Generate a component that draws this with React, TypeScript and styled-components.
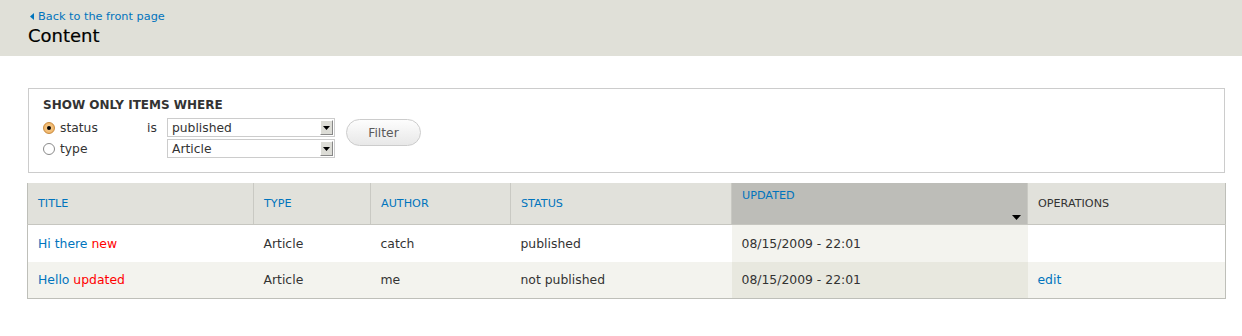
import React from "react";
import styled, { createGlobalStyle } from "styled-components";

const GlobalStyle = createGlobalStyle`
  body {
    margin: 0;
    background: #fff;
    color: #333;
    font-family: "DejaVu Sans", Verdana, sans-serif;
    font-size: 12px;
  }
`;

const link = "#0074bd";

interface Row {
  title: string;
  marker: string;
  type: string;
  author: string;
  status: string;
  updated: string;
  ops?: string;
}

const rows: Row[] = [
  {
    title: "Hi there",
    marker: "new",
    type: "Article",
    author: "catch",
    status: "published",
    updated: "08/15/2009 - 22:01",
  },
  {
    title: "Hello",
    marker: "updated",
    type: "Article",
    author: "me",
    status: "not published",
    updated: "08/15/2009 - 22:01",
    ops: "edit",
  },
];

function Radio({ checked }: { checked?: boolean }) {
  return (
    <RadioCircle $checked={checked}>{checked && <RadioDot />}</RadioCircle>
  );
}

function Select({ value }: { value: string }) {
  return (
    <SelectBox>
      <SelectValue>{value}</SelectValue>
      <SelectButton>
        <svg width="7" height="4" viewBox="0 0 7 4">
          <path d="M0 0h7L3.5 4z" fill="#000" />
        </svg>
      </SelectButton>
    </SelectBox>
  );
}

export default function App() {
  return (
    <>
      <GlobalStyle />
      <Branding>
        <BackLink href="#">
          <svg width="4" height="7" viewBox="0 0 4 7">
            <path d="M4 0v7L0 3.5z" fill={link} />
          </svg>
          Back to the front page
        </BackLink>
        <PageTitle>Content</PageTitle>
      </Branding>

      <Main>
        <Fieldset>
          <Legend>SHOW ONLY ITEMS WHERE</Legend>
          <FilterArea>
            <FilterGrid>
              <Option>
                <Radio checked />
                status
              </Option>
              <Operator>is</Operator>
              <Select value="published" />
              <Option>
                <Radio />
                type
              </Option>
              <span />
              <Select value="Article" />
            </FilterGrid>
            <FilterButton>Filter</FilterButton>
          </FilterArea>
        </Fieldset>

        <Table>
          <colgroup>
            <col style={{ width: 226 }} />
            <col style={{ width: 117 }} />
            <col style={{ width: 140 }} />
            <col style={{ width: 221 }} />
            <col style={{ width: 296 }} />
            <col />
          </colgroup>
          <thead>
            <tr>
              <Th>
                <HeadLink>Title</HeadLink>
              </Th>
              <Th>
                <HeadLink>Type</HeadLink>
              </Th>
              <Th>
                <HeadLink>Author</HeadLink>
              </Th>
              <Th>
                <HeadLink>Status</HeadLink>
              </Th>
              <Th $active>
                <ActiveHead>
                  <HeadLink>Updated</HeadLink>
                  <SortArrow>
                    <svg width="9" height="5" viewBox="0 0 9 5">
                      <path d="M0 0h9L4.5 5z" fill="#000" />
                    </svg>
                  </SortArrow>
                </ActiveHead>
              </Th>
              <Th>Operations</Th>
            </tr>
          </thead>
          <tbody>
            {rows.map((r, i) => (
              <Tr key={i} $even={i % 2 === 1}>
                <Td>
                  <TitleLink>{r.title}</TitleLink> <Marker>{r.marker}</Marker>
                </Td>
                <Td>{r.type}</Td>
                <Td>{r.author}</Td>
                <Td>{r.status}</Td>
                <Td $active $even={i % 2 === 1}>
                  {r.updated}
                </Td>
                <Td>{r.ops && <TitleLink>{r.ops}</TitleLink>}</Td>
              </Tr>
            ))}
          </tbody>
        </Table>
      </Main>
    </>
  );
}

const Branding = styled.div`
  background: #e0e0d8;
  height: 56px;
  box-sizing: border-box;
  padding: 9px 0 0 28px;
  display: flex;
  flex-direction: column;
`;

const BackLink = styled.a`
  display: flex;
  align-items: center;
  gap: 4px;
  font-size: 11.3px;
  line-height: 15px;
  color: ${link};
  text-decoration: none;
  svg {
    margin-left: 2px;
  }
`;

const PageTitle = styled.h1`
  margin: 1px 0 0;
  font-size: 18px;
  font-weight: normal;
  line-height: 22px;
  color: #000;
  -webkit-text-stroke: 0.2px #000;
`;

const Main = styled.div`
  padding: 32px 16px 0 27px;
`;

const Fieldset = styled.div`
  margin: 0 1px;
  border: 1px solid #ccc;
  height: 85px;
  box-sizing: border-box;
  padding: 8px 14px 0 14px;
`;

const Legend = styled.div`
  font-weight: bold;
  font-size: 12px;
  line-height: 16px;
  color: #333;
`;

const FilterArea = styled.div`
  display: flex;
  align-items: flex-start;
  margin-top: 5px;
`;

const FilterGrid = styled.div`
  display: grid;
  grid-template-columns: 104px 20px 168px;
  row-gap: 2px;
  align-items: center;
`;

const Option = styled.div`
  display: flex;
  align-items: center;
  gap: 5px;
  font-size: 12.3px;
  color: #333;
  padding-top: 1px;
`;

const Operator = styled.span`
  font-size: 12.3px;
  padding-top: 1px;
`;

const RadioCircle = styled.span<{ $checked?: boolean }>`
  width: 12px;
  height: 12px;
  box-sizing: border-box;
  border-radius: 50%;
  border: 1px solid ${(p) => (p.$checked ? "#c98b3e" : "#8a8a8a")};
  background: ${(p) =>
    p.$checked ? "radial-gradient(circle, #f7d39c 0%, #eeaa55 100%)" : "#fff"};
  display: flex;
  align-items: center;
  justify-content: center;
`;

const RadioDot = styled.span`
  width: 4px;
  height: 4px;
  border-radius: 50%;
  background: #000;
`;

const SelectBox = styled.div`
  height: 19px;
  box-sizing: border-box;
  border: 1px solid #ccc;
  background: #fff;
  display: flex;
  align-items: center;
`;

const SelectValue = styled.span`
  flex: 1;
  padding-left: 4px;
  font-size: 12.3px;
  color: #333;
`;

const SelectButton = styled.span`
  width: 13px;
  height: 15px;
  margin-right: 1px;
  box-sizing: border-box;
  border-top: 1px solid #fff;
  border-left: 1px solid #fff;
  border-right: 1px solid #888;
  border-bottom: 1px solid #888;
  background: #dcdcd6;
  display: flex;
  align-items: center;
  justify-content: center;
`;

const FilterButton = styled.button`
  margin: 1px 0 0 11px;
  width: 75px;
  height: 27px;
  border-radius: 14px;
  border: 1px solid #ccc;
  background: linear-gradient(#fdfdfd, #e8e8e8);
  color: #5a5a5a;
  font-family: inherit;
  font-size: 12.3px;
  padding: 0;
`;

const Table = styled.table`
  margin-top: 10px;
  width: 100%;
  border-collapse: collapse;
  table-layout: fixed;
  border-left: 1px solid #bebfb9;
  border-right: 1px solid #bebfb9;
  border-bottom: 1px solid #bebfb9;
`;

const Th = styled.th<{ $active?: boolean }>`
  height: 41px;
  box-sizing: border-box;
  padding: 0 10px;
  text-align: left;
  font-weight: normal;
  font-size: 11.2px;
  text-transform: uppercase;
  color: #333;
  background: ${(p) => (p.$active ? "#bdbdb8" : "#e1e1db")};
  border-bottom: 1px solid #c6c6c0;
  border-left: 1px solid #c9c9c3;
  &:first-child {
    border-left: none;
  }
`;

const ActiveHead = styled.div`
  display: flex;
  flex-direction: column;
  height: 41px;
  box-sizing: border-box;
  padding: 6px 0 4px;
`;

const SortArrow = styled.div`
  margin-top: auto;
  align-self: flex-end;
  line-height: 0;
  margin-right: -4px;
`;

const HeadLink = styled.a`
  color: ${link};
  text-decoration: none;
`;

const Tr = styled.tr<{ $even?: boolean }>`
  background: ${(p) => (p.$even ? "#f3f3ee" : "#fff")};
`;

const Td = styled.td<{ $active?: boolean; $even?: boolean }>`
  height: 37px;
  box-sizing: border-box;
  padding: 0 10px;
  font-size: 12.4px;
  color: #333;
  white-space: nowrap;
  background: ${(p) =>
    p.$active ? (p.$even ? "#e8e8df" : "#f3f3ee") : "transparent"};
`;

const TitleLink = styled.a`
  color: ${link};
  text-decoration: none;
`;

const Marker = styled.span`
  color: #f00;
`;
